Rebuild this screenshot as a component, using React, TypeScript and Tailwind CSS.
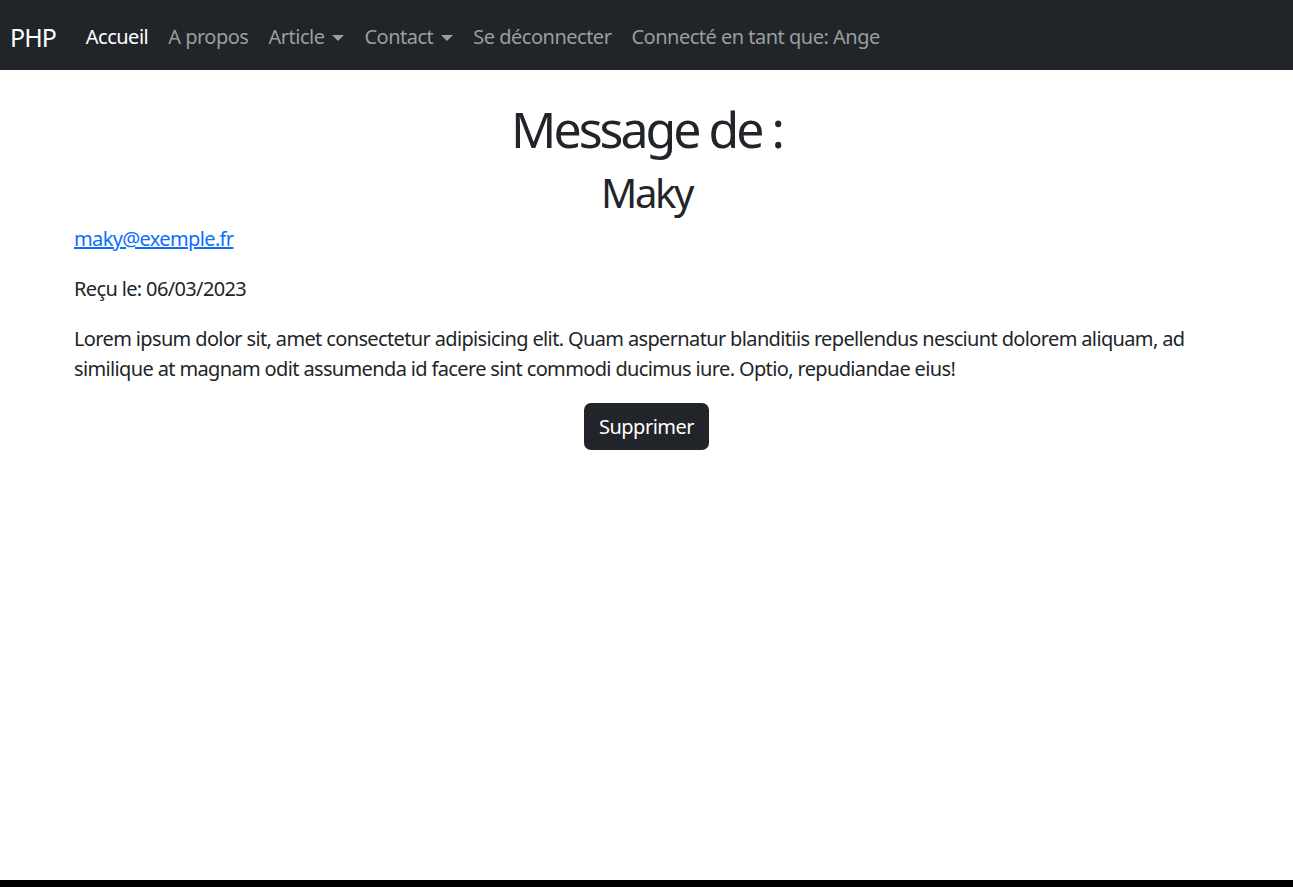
import { ReactNode } from "react";

const font = { fontFamily: '"Segoe UI", "Noto Sans", sans-serif' };

const NavLink = ({
    children,
    active,
    caret,
}: {
    children: ReactNode;
    active?: boolean;
    caret?: boolean;
}) => (
    <a
        href="#"
        className={`flex items-center px-[10px] text-[20px] leading-[30px] tracking-[-0.025em] ${
            active ? "text-white" : "text-[#9b9d9f]"
        }`}
    >
        {children}
        {caret && (
            <span className="ml-[8px] inline-block h-0 w-0 border-x-[6px] border-t-[6px] border-x-transparent border-t-[#9b9d9f] translate-y-[1px]" />
        )}
    </a>
);

export default function App() {
    return (
        <div className="flex h-[887px] flex-col bg-black" style={font}>
            <div className="h-[880px] bg-white text-[#212529]">
                {/* navbar */}
                <nav className="flex h-[70px] items-center bg-[#212529] pl-[10px] pt-[4px]">
                    <a
                        href="#"
                        className="mr-[20px] text-[25px] leading-[36px] tracking-[-0.04em] text-white"
                    >
                        PHP
                    </a>
                    <div className="flex items-center">
                        <NavLink active>Accueil</NavLink>
                        <NavLink>A propos</NavLink>
                        <NavLink caret>Article</NavLink>
                        <NavLink caret>Contact</NavLink>
                        <NavLink>Se déconnecter</NavLink>
                        <NavLink>Connecté en tant que: Ange</NavLink>
                    </div>
                </nav>

                {/* message */}
                <main className="mx-[74px] pt-[29px] text-[20px] leading-[30px] tracking-[-0.032em]">
                    <h1 className="mb-[10px] text-center text-[50px] leading-[60px] tracking-[-0.06em]">
                        Message de :
                    </h1>
                    <h2 className="mb-[7px] text-center text-[40px] leading-[48px] tracking-[-0.06em]">
                        Maky
                    </h2>
                    <p className="mb-[20px]">
                        <a href="#" className="text-[#0d6efd] underline">
                            maky@exemple.fr
                        </a>
                    </p>
                    <p className="mb-[20px]">Reçu le: 06/03/2023</p>
                    <p className="mb-[19px]">
                        Lorem ipsum dolor sit, amet consectetur adipisicing
                        elit. Quam aspernatur blanditiis repellendus nesciunt
                        dolorem aliquam, ad similique at magnam odit assumenda
                        id facere sint commodi ducimus iure. Optio,
                        repudiandae eius!
                    </p>
                    <div className="flex justify-center">
                        <button className="h-[47px] rounded-[7px] bg-[#212529] px-[15px] tracking-[-0.025em] text-white">
                            Supprimer
                        </button>
                    </div>
                </main>
            </div>
        </div>
    );
}
